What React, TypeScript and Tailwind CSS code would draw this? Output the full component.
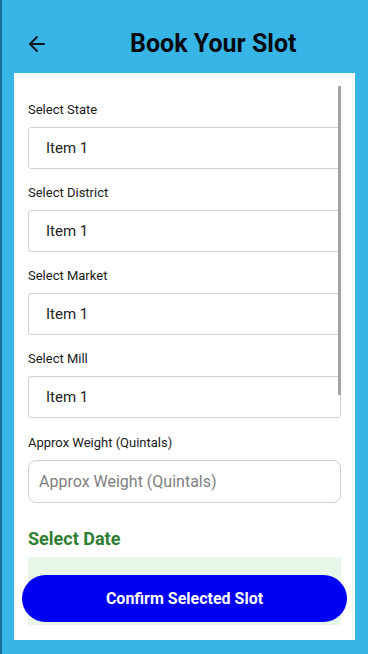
import React from "react";
import { ArrowLeft } from "lucide-react";

const Select = ({ label }: { label: string }) => (
  <div className="flex flex-col">
    <div className="h-[18px] text-[13px] leading-[18px] text-[#1a1a1a]">{label}</div>
    <div className="mt-[8px] h-[42px] rounded-[3px] border border-[#d2d2d2] bg-white flex items-center pl-[17px] text-[15px] text-[#222]">
      Item 1
    </div>
  </div>
);

export default function App() {
  return (
    <div
      className="relative w-[368px] h-[654px] bg-[#36b5e6] border-l-2 border-[#1d6d9c] overflow-hidden"
      style={{ fontFamily: "Roboto, 'Noto Sans', sans-serif" }}
    >
      <div className="h-[73px] pt-[15px] flex items-center">
        <div className="ml-[23px] text-[#0b1620]">
          <ArrowLeft size={24} strokeWidth={2} />
        </div>
        <div className="ml-[81px] text-[25px] leading-[28px] font-bold text-[#050a10]">Book Your Slot</div>
      </div>
      <div className="ml-[12px] w-[341px] h-[567px] bg-white pt-[13px] pb-[15px] px-[14px]">
        <div className="relative h-[539px] overflow-hidden">
          <div className="pt-[15px] flex flex-col gap-[15px]">
            <Select label="Select State" />
            <Select label="Select District" />
            <Select label="Select Market" />
            <Select label="Select Mill" />
            <div className="flex flex-col pt-[1px]">
              <div className="h-[18px] text-[13px] leading-[18px] text-[#1a1a1a]">Approx Weight (Quintals)</div>
              <div className="mt-[8px] h-[43px] rounded-[8px] border border-[#cfcfcf] bg-white flex items-center pl-[10px] text-[16px] text-[#808080]">
                Approx Weight (Quintals)
              </div>
            </div>
          </div>
          <div className="mt-[24px] h-[24px] text-[18px] leading-[24px] font-bold text-[#2e7d32]">Select Date</div>
          <div className="mt-[6px] h-[200px] bg-[#e8f5e9]"></div>
          <div className="absolute right-0 top-0 w-[3px] h-[309px] bg-[#a4a4a4]"></div>
        </div>
      </div>
      <div className="absolute left-[20px] top-[575px] w-[325px] h-[47px] rounded-full bg-[#0000f5] flex items-center justify-center text-white text-[16px] font-bold">
        Confirm Selected Slot
      </div>
    </div>
  );
}
